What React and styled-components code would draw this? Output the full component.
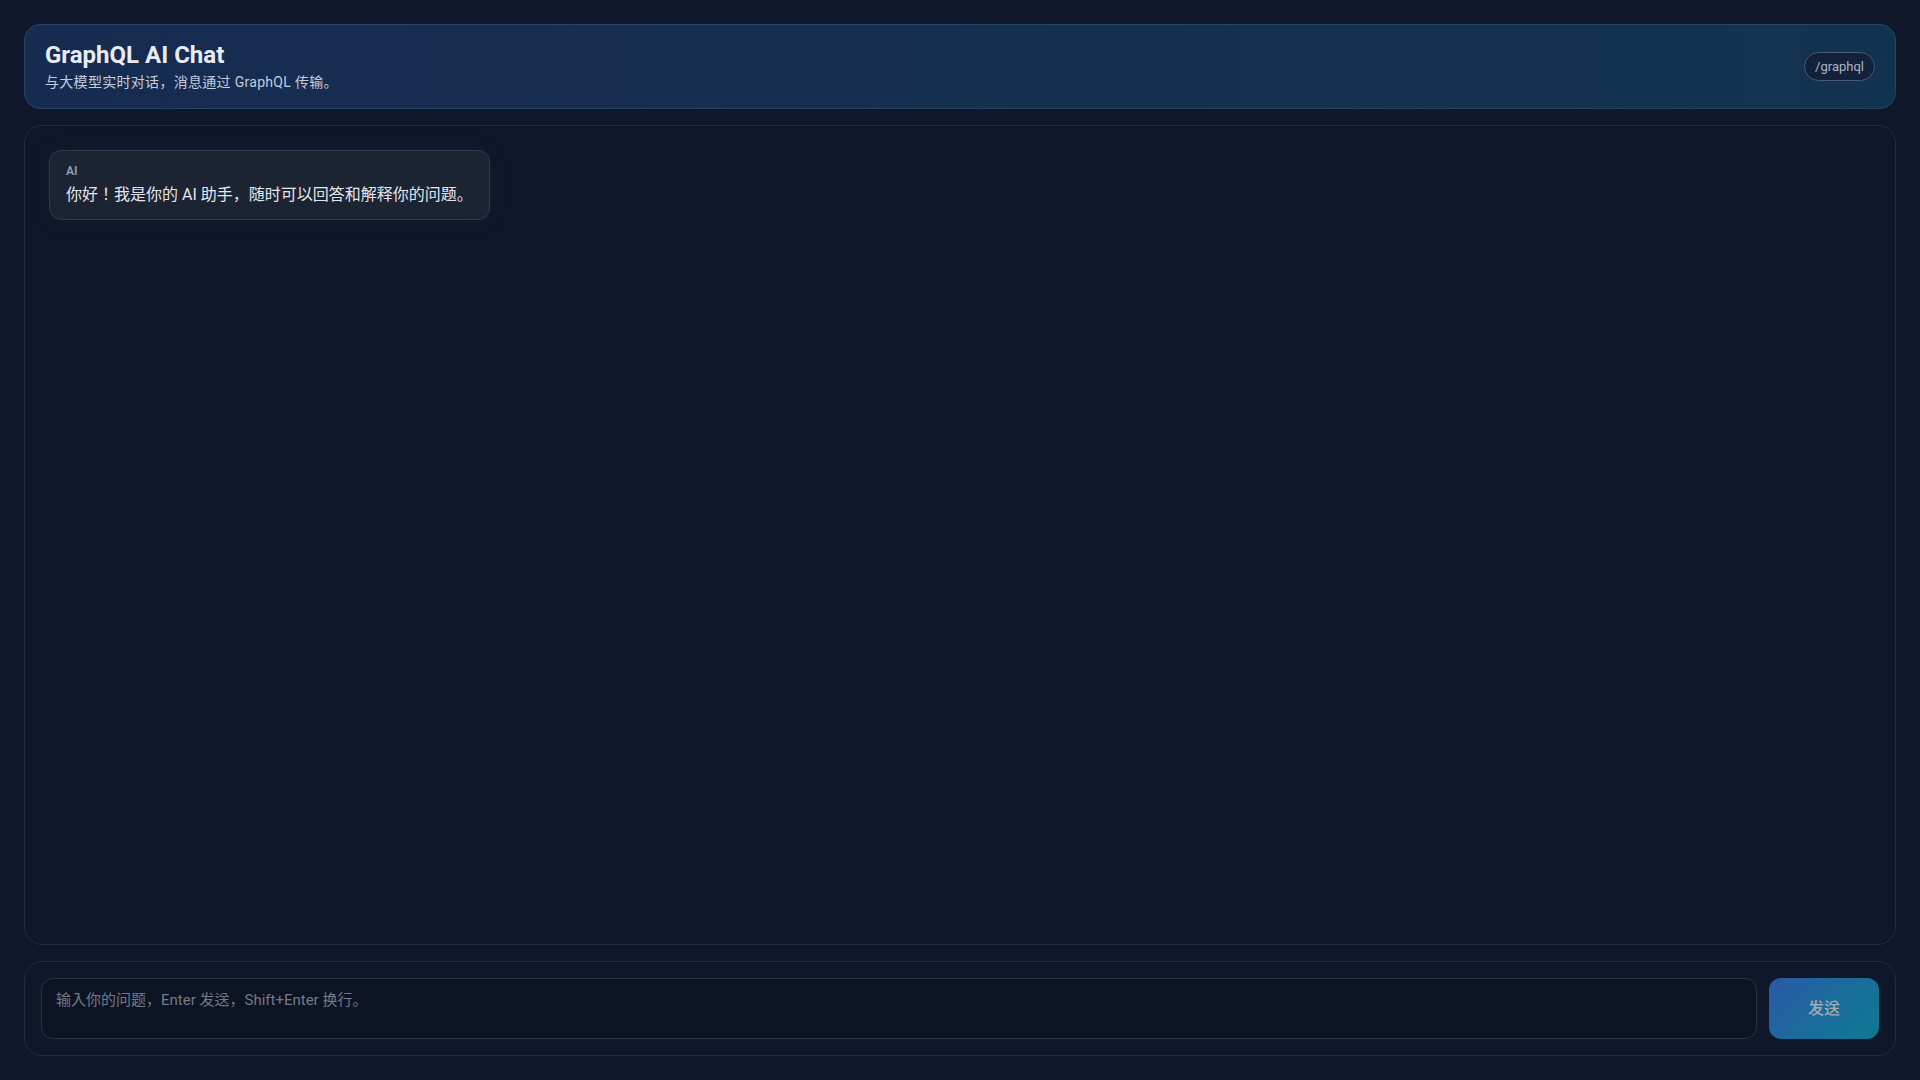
import styled, { createGlobalStyle } from "styled-components";

const GlobalStyle = createGlobalStyle`
  * {
    box-sizing: border-box;
  }
  html, body {
    margin: 0;
    height: 100%;
    background: #10172a;
    color: #e5e7eb;
    font-family: Roboto, "Noto Sans CJK KR", "Noto Sans CJK SC", sans-serif;
  }
  #root {
    height: 100%;
  }
`;

const messages = [
  { role: "AI", text: "你好！我是你的 AI 助手，随时可以回答和解释你的问题。" },
];

const Page = styled.div`
  height: 100vh;
  padding: 24px;
  display: flex;
  flex-direction: column;
  gap: 16px;
`;

const Header = styled.header`
  display: flex;
  align-items: center;
  justify-content: space-between;
  padding: 16px 20px;
  border: 1px solid #24446a;
  border-radius: 16px;
  background: linear-gradient(90deg, #172b51 0%, #15304f 60%, #12334f 100%);
`;

const Title = styled.h1`
  margin: 0;
  font-size: 24px;
  line-height: 28px;
  font-weight: 700;
  color: #e8ecf2;
`;

const Subtitle = styled.p`
  margin: 3px 0 0 0;
  font-size: 14px;
  line-height: 20px;
  letter-spacing: 0.3px;
  color: #c3cedd;
`;

const Badge = styled.span`
  padding: 5px 10px;
  font-size: 13px;
  line-height: 17px;
  color: #a9b5c6;
  background: #13213b;
  border: 1px solid #4a5a72;
  border-radius: 999px;
`;

const ChatPanel = styled.main`
  flex: 1;
  min-height: 0;
  overflow-y: auto;
  padding: 24px;
  border: 1px solid #222b3c;
  border-radius: 18px;
  background: #0f172a;
  display: flex;
  flex-direction: column;
  gap: 12px;
`;

const Bubble = styled.div`
  align-self: ${(p) => (p.$mine ? "flex-end" : "flex-start")};
  max-width: 70%;
  padding: 12px 16px;
  border: 1px solid #2f3a4d;
  border-radius: 12px;
  background: #1c2333;
  box-shadow: 0 0 18px rgba(30, 41, 59, 0.35);
`;

const Role = styled.div`
  font-size: 12px;
  line-height: 16px;
  font-weight: 700;
  color: #8e99ab;
`;

const MessageText = styled.div`
  margin-top: 4px;
  font-size: 16px;
  line-height: 24px;
  color: #e2e6ec;
  white-space: pre-wrap;
`;

const Composer = styled.form`
  display: flex;
  gap: 12px;
  padding: 16px;
  border: 1px solid #222b3c;
  border-radius: 18px;
  background: #0f172a;
`;

const Input = styled.textarea`
  flex: 1;
  height: 61px;
  resize: none;
  padding: 10px 14px;
  font-family: inherit;
  font-size: 15px;
  line-height: 22px;
  color: #e5e7eb;
  background: #0c1323;
  border: 1px solid #283244;
  border-radius: 12px;
  outline: none;

  &::placeholder {
    color: #737a86;
  }
`;

const SendButton = styled.button`
  width: 110px;
  height: 61px;
  border: none;
  border-radius: 12px;
  font-family: inherit;
  font-size: 16px;
  font-weight: 500;
  line-height: 20px;
  color: #a2aab5;
  background: linear-gradient(135deg, #2b58a8 0%, #1b6c9c 50%, #0e7990 100%);
  cursor: not-allowed;
`;

export default function App() {
  return (
    <>
      <GlobalStyle />
      <Page>
        <Header>
          <div>
            <Title>GraphQL AI Chat</Title>
            <Subtitle>与大模型实时对话，消息通过 GraphQL 传输。</Subtitle>
          </div>
          <Badge>/graphql</Badge>
        </Header>
        <ChatPanel>
          {messages.map((m, i) => (
            <Bubble key={i} $mine={m.role !== "AI"}>
              <Role>{m.role}</Role>
              <MessageText>{m.text}</MessageText>
            </Bubble>
          ))}
        </ChatPanel>
        <Composer onSubmit={(e) => e.preventDefault()}>
          <Input placeholder="输入你的问题，Enter 发送，Shift+Enter 换行。" />
          <SendButton type="submit" disabled>
            发送
          </SendButton>
        </Composer>
      </Page>
    </>
  );
}
